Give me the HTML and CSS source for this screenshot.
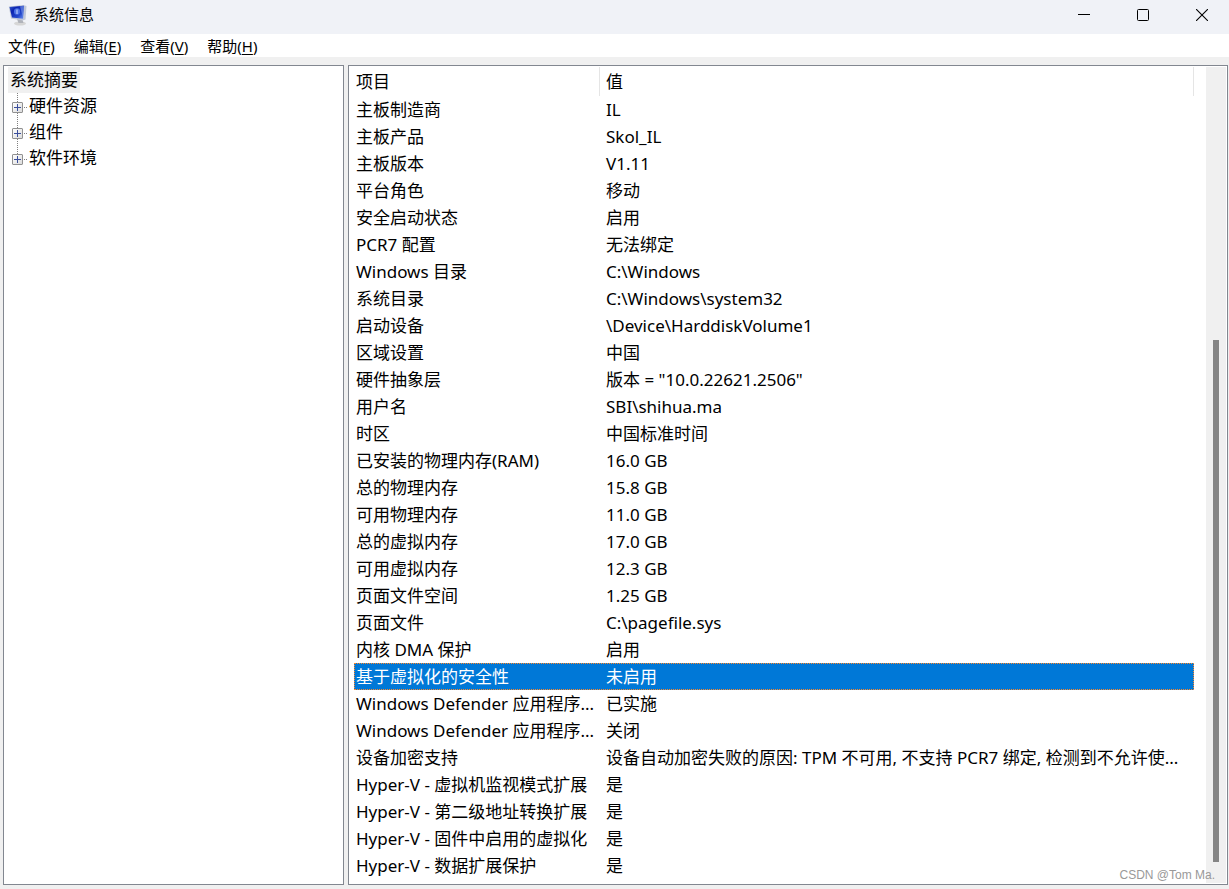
FILE: index.html
```html
<!DOCTYPE html>
<html lang="zh-CN">
<head>
<meta charset="utf-8">
<title>系统信息</title>
<link rel="stylesheet" href="styles.css">
</head>
<body>
<div class="window">
  <header class="titlebar">
    <svg class="app-icon" width="20" height="22" viewBox="0 0 20 22" aria-hidden="true">
      <defs>
        <linearGradient id="screen" x1="0" y1="0" x2="1" y2="1">
          <stop offset="0" stop-color="#3c62d0"/>
          <stop offset=".3" stop-color="#0a22b0"/>
          <stop offset=".7" stop-color="#2448cc"/>
          <stop offset="1" stop-color="#6f92f0"/>
        </linearGradient>
      </defs>
      <ellipse cx="12" cy="19.500" rx="6" ry="2" fill="#d6d6d6"/>
      <path d="M9 15l5-1 1.500 5h-5z" fill="#b0b3ba"/>
      <path d="M.8 2.500L15 1l3.500 1-1 13.500-3 1L3 14.500z" fill="#c0c7d8"/>
      <path d="M1.500 3L16 1.800l-1 13L4 13.500z" fill="url(#screen)"/>
      <path d="M12 2.200l4-.4-1 12z" fill="#8aa6f0" opacity=".5"/>
      <ellipse cx="9" cy="7.500" rx="3" ry="3.200" fill="#4a70e4"/>
      <path d="M9 5.500v4.500" stroke="#c8d6ff"/>
    </svg>
    <h1 class="title">系统信息</h1>
    <div class="controls">
      <button class="control" type="button" aria-label="最小化"><svg width="12" height="12" viewBox="0 0 12 12"><path d="M0 5.500h12" stroke="#000"/></svg></button>
      <button class="control" type="button" aria-label="最大化"><svg width="12" height="12" viewBox="0 0 12 12"><rect x=".5" y=".5" width="11" height="11" rx="1" fill="none" stroke="#000"/></svg></button>
      <button class="control" type="button" aria-label="关闭"><svg width="12" height="12" viewBox="0 0 12 12"><path d="M0 0l12 12M12 0L0 12" stroke="#000" stroke-width="1.100"/></svg></button>
    </div>
  </header>
  <nav class="menubar">
    <button class="menu" type="button">文件(<u>F</u>)</button>
    <button class="menu" type="button">编辑(<u>E</u>)</button>
    <button class="menu" type="button">查看(<u>V</u>)</button>
    <button class="menu" type="button">帮助(<u>H</u>)</button>
  </nav>
  <main class="panes">
    <aside class="tree-pane">
      <div class="tree-root">系统摘要</div>
      <ul class="tree">
        <li class="node"><button class="expander" type="button" aria-label="展开硬件资源"></button><span class="branch"></span>硬件资源</li>
        <li class="node"><button class="expander" type="button" aria-label="展开组件"></button><span class="branch"></span>组件</li>
        <li class="node"><button class="expander" type="button" aria-label="展开软件环境"></button><span class="branch"></span>软件环境</li>
      </ul>
    </aside>
    <section class="list-pane">
      <table class="list">
        <colgroup><col class="col-item"><col></colgroup>
        <thead><tr><th>项目</th><th>值</th></tr></thead>
        <tbody>
          <tr><td>主板制造商</td><td>IL</td></tr>
          <tr><td>主板产品</td><td>Skol_IL</td></tr>
          <tr><td>主板版本</td><td>V1.11</td></tr>
          <tr><td>平台角色</td><td>移动</td></tr>
          <tr><td>安全启动状态</td><td>启用</td></tr>
          <tr><td>PCR7 配置</td><td>无法绑定</td></tr>
          <tr><td>Windows 目录</td><td>C:\Windows</td></tr>
          <tr><td>系统目录</td><td>C:\Windows\system32</td></tr>
          <tr><td>启动设备</td><td>\Device\HarddiskVolume1</td></tr>
          <tr><td>区域设置</td><td>中国</td></tr>
          <tr><td>硬件抽象层</td><td>版本 = "10.0.22621.2506"</td></tr>
          <tr><td>用户名</td><td>SBI\shihua.ma</td></tr>
          <tr><td>时区</td><td>中国标准时间</td></tr>
          <tr><td>已安装的物理内存(RAM)</td><td>16.0 GB</td></tr>
          <tr><td>总的物理内存</td><td>15.8 GB</td></tr>
          <tr><td>可用物理内存</td><td>11.0 GB</td></tr>
          <tr><td>总的虚拟内存</td><td>17.0 GB</td></tr>
          <tr><td>可用虚拟内存</td><td>12.3 GB</td></tr>
          <tr><td>页面文件空间</td><td>1.25 GB</td></tr>
          <tr><td>页面文件</td><td>C:\pagefile.sys</td></tr>
          <tr><td>内核 DMA 保护</td><td>启用</td></tr>
          <tr class="selected"><td>基于虚拟化的安全性</td><td>未启用</td></tr>
          <tr><td>Windows Defender 应用程序...</td><td>已实施</td></tr>
          <tr><td>Windows Defender 应用程序...</td><td>关闭</td></tr>
          <tr><td>设备加密支持</td><td>设备自动加密失败的原因: TPM 不可用, 不支持 PCR7 绑定, 检测到不允许使...</td></tr>
          <tr><td>Hyper-V - 虚拟机监视模式扩展</td><td>是</td></tr>
          <tr><td>Hyper-V - 第二级地址转换扩展</td><td>是</td></tr>
          <tr><td>Hyper-V - 固件中启用的虚拟化</td><td>是</td></tr>
          <tr><td>Hyper-V - 数据扩展保护</td><td>是</td></tr>
        </tbody>
      </table>
      <div class="scrollbar"><div class="thumb"></div></div>
    </section>
  </main>
  <div class="watermark">CSDN @Tom Ma.</div>
</div>
</body>
</html>
```
FILE: styles.css
```css
* { box-sizing: border-box; }

body {
  margin: 0;
  background: #f0f0f0;
  color: #000;
  font: 17px/26px "Noto Sans", "Noto Sans CJK SC", sans-serif;
}

button {
  margin: 0;
  padding: 0;
  border: 0;
  background: none;
  color: inherit;
  font: inherit;
}

.window {
  position: relative;
  display: flex;
  flex-direction: column;
  min-height: 100vh;
}

.titlebar {
  display: flex;
  align-items: center;
  height: 34px;
  padding-left: 8px;
  background: #f0f2f7;
}

.app-icon { margin-bottom: 4px; }

.title {
  flex: 1;
  margin: 0 0 6px 6px;
  font-size: 15px;
  font-weight: 400;
  line-height: 24px;
}

.controls {
  display: flex;
  gap: 5px;
}

.control {
  display: flex;
  align-items: center;
  justify-content: center;
  width: 54px;
  height: 34px;
  padding-bottom: 4px;
}

.menubar {
  display: flex;
  gap: 19px;
  height: 23px;
  padding-left: 8px;
  background: #fff;
}

.menu {
  font-size: 15px;
  line-height: 24px;
}

.menu u { text-underline-offset: 2px; }

.panes {
  display: flex;
  flex: 1;
  gap: 4px;
  padding: 8px 1px 4px 3px;
}

.tree-pane,
.list-pane {
  border: 1px solid #828790;
  background: #fff;
}

.tree-pane {
  flex: none;
  width: 341px;
  padding: 1px 4px;
}

.tree-root {
  width: max-content;
  padding: 0 2px;
  background: #f0f0f0;
}

.tree {
  margin: 0 0 0 9px;
  padding: 0;
  list-style: none;
}

.node {
  display: flex;
  align-items: center;
  height: 26px;
  background: repeating-linear-gradient(#808080 0 1px, transparent 1px 2px) no-repeat 0 0 / 1px 100%;
}

.node:last-child { background-size: 1px 50%; }

.expander {
  width: 11px;
  height: 11px;
  margin: 2px 0 0 -5px;
  border: 1px solid #919191;
  border-radius: 1px;
  background:
    linear-gradient(#3b4f9c, #3b4f9c) no-repeat center / 7px 1px,
    linear-gradient(#3b4f9c, #3b4f9c) no-repeat center / 1px 7px,
    linear-gradient(135deg, #fff, #dcdcdc);
}

.branch {
  width: 4px;
  height: 1px;
  margin: 2px 2px 0 0;
  background: repeating-linear-gradient(90deg, transparent 0 1px, #808080 1px 2px);
}

.list-pane {
  display: flex;
  flex: 1;
  align-items: flex-start;
  gap: 12px;
  min-width: 0;
  padding: 1px 1px 1px 5px;
}

.list {
  flex: 1;
  min-width: 0;
  table-layout: fixed;
  border-collapse: separate;
  border-spacing: 0;
}

.col-item { width: 246px; }

.list th,
.list td {
  overflow: hidden;
  height: 27px;
  padding: 0 0 0 6px;
  font-weight: 400;
  text-align: left;
  white-space: nowrap;
}

.list th:first-child,
.list td:first-child { padding-left: 2px; }

.list th {
  height: 29px;
  border-right: 1px solid #e5e5e5;
}

.selected {
  background: #0078d7;
  color: #fff;
  outline: 1px dotted #ff8728;
  outline-offset: -1px;
}

.scrollbar {
  display: flex;
  flex-direction: column;
  align-items: center;
  align-self: stretch;
  justify-content: flex-end;
  width: 20px;
  padding-bottom: 21px;
  background: #f0f0f0;
}

.thumb {
  width: 6px;
  height: 65.7%;
  background: #858585;
}

.watermark {
  position: absolute;
  right: 14px;
  bottom: 6px;
  color: #999;
  font: 12px/16px "Liberation Sans", Arial, sans-serif;
}
```
